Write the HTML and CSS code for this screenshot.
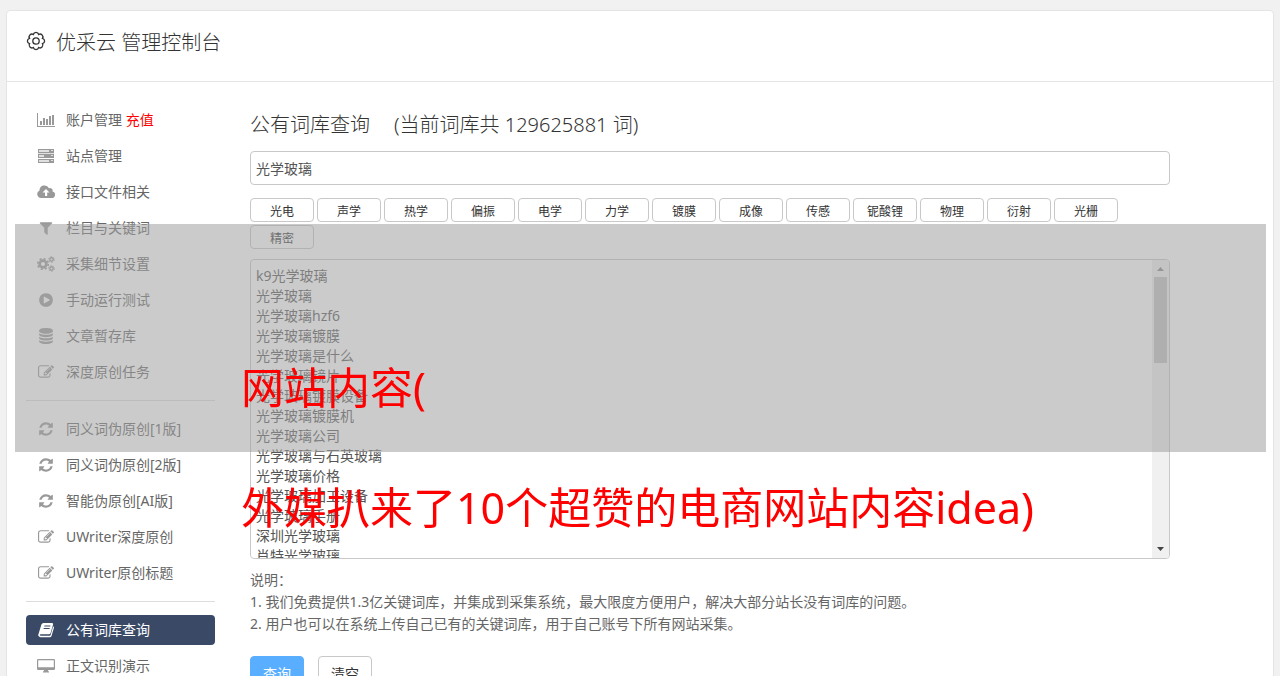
FILE: index.html
```html
<!DOCTYPE html>
<html lang="zh-CN">
<head>
  <meta charset="UTF-8">
  <title>优采云 管理控制台</title>
  <link rel="stylesheet" href="styles.css">
</head>
<body>

  <svg class="sprite" aria-hidden="true">
    <symbol id="i-chart" viewBox="0 0 18 16"><path d="M0 1h1v13h17v1H0zM3 9h2v4H3zM6 6h2v7H6zM9 7h2v6H9zM12 4h2v9h-2zM15 3h2v10h-2z"/></symbol>
    <symbol id="i-server" viewBox="0 0 18 16"><path d="M1 2h16v4H1zM1 6h16v4H1zM1 11h16v4H1z" opacity=".3"/><path fill-rule="evenodd" d="M1 1h16v4H1zM2 2v2h10V2zM14 2v1h2V2zM1 6h16v4H1zM2 7v2h5V7zM14 7v1h2V7zM1 11h16v4H1zM2 12v2h10v-2zM14 12v1h2v-1z"/></symbol>
    <symbol id="i-cloud" viewBox="0 0 18 16"><path fill-rule="evenodd" d="M4 14a4 4 0 0 1-1.500-7.600A5 5 0 0 1 12 4.300a2.600 2.600 0 0 1 3.500 3.200A3.300 3.300 0 0 1 14.500 14zM9 5L5.500 8.600H8V12h2.200V8.600h2.300z"/></symbol>
    <symbol id="i-filter" viewBox="0 0 1792 1792"><path d="M1595 295q17 41-14 70l-493 493v742q0 42-39 59-13 5-25 5-27 0-45-19l-256-256q-19-19-19-45v-486l-493-493q-31-29-14-70 17-39 59-39h1280q42 0 59 39z"/></symbol>
    <symbol id="i-cogs" viewBox="0 0 18 16">
      <circle cx="6" cy="8" r="3.400" fill="none" stroke="currentColor" stroke-width="2.600"/>
      <circle cx="6" cy="8" r="5.300" fill="none" stroke="currentColor" stroke-width="1.600" stroke-dasharray="2.080 2.080"/>
      <circle cx="14.500" cy="3.500" r="1.700" fill="none" stroke="currentColor" stroke-width="1.400"/>
      <circle cx="14.500" cy="3.500" r="2.800" fill="none" stroke="currentColor" stroke-dasharray="1.460 1.460"/>
      <circle cx="14.500" cy="12.500" r="1.700" fill="none" stroke="currentColor" stroke-width="1.400"/>
      <circle cx="14.500" cy="12.500" r="2.800" fill="none" stroke="currentColor" stroke-dasharray="1.460 1.460"/>
    </symbol>
    <symbol id="i-play" viewBox="0 0 1792 1792"><path d="M896 128q209 0 385.500 103t279.500 279.500 103 385.500-103 385.500-279.500 279.500-385.500 103-385.500-103-279.500-279.500-103-385.500 103-385.500 279.500-279.500 385.500-103zm384 823q32-18 32-55t-32-55l-544-320q-31-19-64-1-32 19-32 56v640q0 37 32 56 16 8 32 8 17 0 32-9z" fill-rule="evenodd"/></symbol>
    <symbol id="i-database" viewBox="0 0 1792 1792"><path d="M896 768q237 0 443-43t325-127v170q0 69-103 128t-280 93.500-385 34.500-385-34.500-280-93.500-103-128v-170q119 84 325 127t443 43zm0 768q237 0 443-43t325-127v170q0 69-103 128t-280 93.500-385 34.500-385-34.500-280-93.500-103-128v-170q119 84 325 127t443 43zm0-384q237 0 443-43t325-127v170q0 69-103 128t-280 93.500-385 34.500-385-34.500-280-93.500-103-128v-170q119 84 325 127t443 43zm0-1152q208 0 385 34.500t280 93.500 103 128v128q0 69-103 128t-280 93.500-385 34.500-385-34.500-280-93.500-103-128v-128q0-69 103-128t280-93.500 385-34.500z"/></symbol>
    <symbol id="i-edit" viewBox="0 0 1792 1792"><path d="M888 1184l116-116-152-152-116 116v56h96v96h56zm440-720q-16-16-33 1l-350 350q-17 17-1 33t33-1l350-350q17-17 1-33zm80 594v190q0 119-84.500 203.500t-203.500 84.500h-832q-119 0-203.500-84.500t-84.500-203.500v-832q0-119 84.500-203.500t203.500-84.500h832q63 0 117 25 15 7 18 23 3 17-9 29l-49 49q-14 14-32 8-23-6-45-6h-832q-66 0-113 47t-47 113v832q0 66 47 113t113 47h832q66 0 113-47t47-113v-126q0-13 9-22l64-64q15-15 35-7t20 29zm-96-738l288 288-672 672h-288v-288zm444 132l-92 92-288-288 92-92q28-28 68-28t68 28l152 152q28 28 28 68t-28 68z"/></symbol>
    <symbol id="i-refresh" viewBox="0 0 1792 1792"><path d="M1639 1056q0 5-1 7-64 268-268 434.500t-478 166.500q-146 0-282.500-55t-243.500-157l-129 129q-19 19-45 19t-45-19-19-45v-448q0-26 19-45t45-19h448q26 0 45 19t19 45-19 45l-137 137q71 66 161 102t187 36q134 0 250-65t186-179q11-17 53-117 8-23 30-23h192q13 0 22.500 9.500t9.500 22.500zm25-800v448q0 26-19 45t-45 19h-448q-26 0-45-19t-19-45 19-45l138-138q-148-137-349-137-134 0-250 65t-186 179q-11 17-53 117-8 23-30 23h-199q-13 0-22.500-9.500t-9.500-22.500v-7q65-268 270-434.500t480-166.500q146 0 284 55.500t245 156.500l130-129q19-19 45-19t45 19 19 45z"/></symbol>
    <symbol id="i-book" viewBox="0 0 18 16"><path fill-rule="evenodd" d="M6.500 1H15q1.500 0 1.100 1.500L13.600 11q-.4 1.300-1.800 1.300H3.600q-1 0-.8.800.2.600 1.100.6h8.700q.8 0 1-.8l2.600-8.600q1 .5.700 1.600l-2.400 8q-.4 1.300-1.800 1.300H3.400Q1.500 15 1.200 13.300q0-.8.400-1.600L4.400 2.600Q5 1 6.500 1zM7.500 3.600l-.3 1h6l.3-1zM6.800 6l-.3 1h6l.3-1z"/></symbol>
    <symbol id="i-desktop" viewBox="0 0 18 16"><path fill-rule="evenodd" d="M1.300 1h15.400q1.300 0 1.300 1.300v8.400q0 1.300-1.300 1.300H11q0 1 .8 1.500.4.500.2 1H6q-.3-.5.200-1Q7 13 7 12H1.300Q0 12 0 10.700V2.300Q0 1 1.300 1zM1.200 2.200v7h15.600v-7z"/></symbol>
  </svg>

  <div class="panel">
    <header class="header">
      <svg class="gear" viewBox="0 0 20 20" aria-hidden="true">
        <path d="M16.470 12.680A2.750 2.750 0 0 1 12.680 16.470A2.750 2.750 0 0 1 7.320 16.470A2.750 2.750 0 0 1 3.530 12.680A2.750 2.750 0 0 1 3.530 7.320A2.750 2.750 0 0 1 7.320 3.530A2.750 2.750 0 0 1 12.680 3.530A2.750 2.750 0 0 1 16.470 7.320A2.750 2.750 0 0 1 16.470 12.680Z"/>
        <circle cx="10" cy="10" r="3.200"/>
      </svg>
      <h1>优采云 管理控制台</h1>
    </header>

    <div class="content">
      <nav class="sidebar">
        <a href="#"><svg><use href="#i-chart"/></svg><span>账户管理 <em>充值</em></span></a>
        <a href="#"><svg><use href="#i-server"/></svg>站点管理</a>
        <a href="#"><svg><use href="#i-cloud"/></svg>接口文件相关</a>
        <a href="#"><svg><use href="#i-filter"/></svg>栏目与关键词</a>
        <a href="#"><svg><use href="#i-cogs"/></svg>采集细节设置</a>
        <a href="#"><svg><use href="#i-play"/></svg>手动运行测试</a>
        <a href="#"><svg><use href="#i-database"/></svg>文章暂存库</a>
        <a href="#"><svg><use href="#i-edit"/></svg>深度原创任务</a>
        <hr>
        <a href="#"><svg><use href="#i-refresh"/></svg>同义词伪原创[1版]</a>
        <a href="#"><svg><use href="#i-refresh"/></svg>同义词伪原创[2版]</a>
        <a href="#"><svg><use href="#i-refresh"/></svg>智能伪原创[AI版]</a>
        <a href="#"><svg><use href="#i-edit"/></svg>UWriter深度原创</a>
        <a href="#"><svg><use href="#i-edit"/></svg>UWriter原创标题</a>
        <hr>
        <a href="#" class="active"><svg><use href="#i-book"/></svg>公有词库查询</a>
        <a href="#"><svg><use href="#i-desktop"/></svg>正文识别演示</a>
      </nav>

      <main class="main">
        <h2><label for="keyword">公有词库查询</label><span>(当前词库共 129625881 词)</span></h2>
        <input type="text" id="keyword" value="光学玻璃">

        <div class="tags">
          <button>光电</button>
          <button>声学</button>
          <button>热学</button>
          <button>偏振</button>
          <button>电学</button>
          <button>力学</button>
          <button>镀膜</button>
          <button>成像</button>
          <button>传感</button>
          <button>铌酸锂</button>
          <button>物理</button>
          <button>衍射</button>
          <button>光栅</button>
          <button>精密</button>
        </div>

        <div class="result-box">
          <textarea id="result" aria-label="查询结果">k9光学玻璃
光学玻璃
光学玻璃hzf6
光学玻璃镀膜
光学玻璃是什么
光学玻璃镜片
光学玻璃镀膜设备
光学玻璃镀膜机
光学玻璃公司
光学玻璃与石英玻璃
光学玻璃价格
光学玻璃加工设备
光学玻璃手册
深圳光学玻璃
肖特光学玻璃</textarea>
          <div class="scrollbar" aria-hidden="true">
            <svg viewBox="0 0 17 17"><path d="M5 11h7L8.500 7z"/></svg>
            <div class="thumb"></div>
            <svg class="down" viewBox="0 0 17 17"><path d="M5 6h7L8.500 10z"/></svg>
          </div>
        </div>

        <div class="note">
          <p>说明：</p>
          <p>1. 我们免费提供1.3亿关键词库，并集成到采集系统，最大限度方便用户，解决大部分站长没有词库的问题。</p>
          <p>2. 用户也可以在系统上传自己已有的关键词库，用于自己账号下所有网站采集。</p>
        </div>

        <div class="actions">
          <button class="primary">查询</button>
          <button>清空</button>
        </div>
      </main>
    </div>
  </div>

  <div class="banner">
    <p>网站内容(</p>
    <p>外媒扒来了10个超赞的电商网站内容idea)</p>
  </div>

</body>
</html>
```
FILE: styles.css
```css
* {
  box-sizing: border-box;
}

body {
  position: relative;
  height: 100vh;
  margin: 0;
  padding: 10px 6px 0;
  overflow: hidden;
  background-color: #f1f1f1;
  color: #333;
  font-family: "Noto Sans", "Noto Sans CJK SC", sans-serif;
  font-size: 14px;
}

h1, h2, p {
  margin: 0;
  font-weight: 400;
}

input, textarea, button {
  border: 1px solid #c8c8c8;
  border-radius: 4px;
  background-color: white;
  color: #555;
  font: inherit;
}

.sprite {
  display: none;
}

.panel {
  border: 1px solid #e4e4e4;
  border-radius: 4px;
  background-color: white;
}

.header {
  display: flex;
  align-items: center;
  gap: 10px;
  height: 71px;
  padding: 0 19px 10px;
  border-bottom: 1px solid #e4e4e4;
}

.header h1 {
  font-size: 20px;
  font-weight: 300;
}

.gear {
  width: 20px;
  height: 20px;
  fill: none;
  stroke: #333;
  stroke-width: 1.3;
}

.content {
  display: flex;
  gap: 35px;
  padding: 23px 19px;
}

.sidebar {
  display: flex;
  flex-direction: column;
  flex: 0 0 189px;
  gap: 6px;
}

.sidebar a {
  display: flex;
  align-items: center;
  gap: 11px;
  height: 30px;
  padding: 0 11px 2px;
  border-radius: 4px;
  color: #666;
  text-decoration: none;
  white-space: nowrap;
}

.sidebar svg {
  width: 18px;
  height: 16px;
  margin-top: 2px;
  color: #999;
  fill: currentColor;
}

.sidebar em {
  color: red;
  font-style: normal;
}

.sidebar hr {
  width: 100%;
  margin: 7px 0;
  border: 0;
  border-top: 1px solid #ddd;
}

.sidebar .active {
  background-color: #3a4a66;
  color: white;
}

.sidebar .active svg {
  color: white;
}

.main {
  flex: 0 1 920px;
  min-width: 0;
}

.main h2 {
  display: flex;
  gap: 24px;
  font-size: 20px;
  font-weight: 300;
  line-height: 40px;
}

#keyword {
  display: block;
  width: 100%;
  height: 34px;
  margin: 6px 0 13px;
  padding: 0 5px;
}

.tags {
  display: flex;
  flex-wrap: wrap;
  gap: 3px;
}

.tags button {
  width: 64px;
  height: 24px;
  padding: 2px 0 0;
  color: #333;
  font-size: 12px;
}

.result-box {
  display: flex;
  height: 300px;
  margin: 10px 0;
  overflow: hidden;
  border: 1px solid #c8c8c8;
  border-radius: 4px;
}

#result {
  flex: 1;
  padding: 6px 5px;
  border: 0;
  line-height: 20px;
  resize: none;
  scrollbar-width: none;
}

.scrollbar {
  display: flex;
  flex-direction: column;
  width: 17px;
  background-color: #f0f0f0;
}

.scrollbar svg {
  width: 17px;
  height: 17px;
  fill: #888;
}

.scrollbar .down {
  margin-top: auto;
  fill: #444;
}

.scrollbar .thumb {
  height: 86px;
  margin: 0 2px;
  background-color: #c1c1c1;
}

.note {
  color: #666;
  line-height: 22px;
}

.actions {
  display: flex;
  gap: 14px;
  margin-top: 21px;
}

.actions button {
  width: 54px;
  height: 34px;
  padding: 0;
  color: #333;
}

.actions .primary {
  border-color: #59aeff;
  background-color: #59aeff;
  color: white;
}

.banner {
  position: absolute;
  top: 224px;
  left: 15px;
  right: 14px;
  height: 228px;
  padding: 104px 0 0 226px;
  background-color: rgba(160, 160, 160, 0.55);
  color: red;
  font-size: 43px;
  line-height: 120px;
  white-space: nowrap;
}
```
